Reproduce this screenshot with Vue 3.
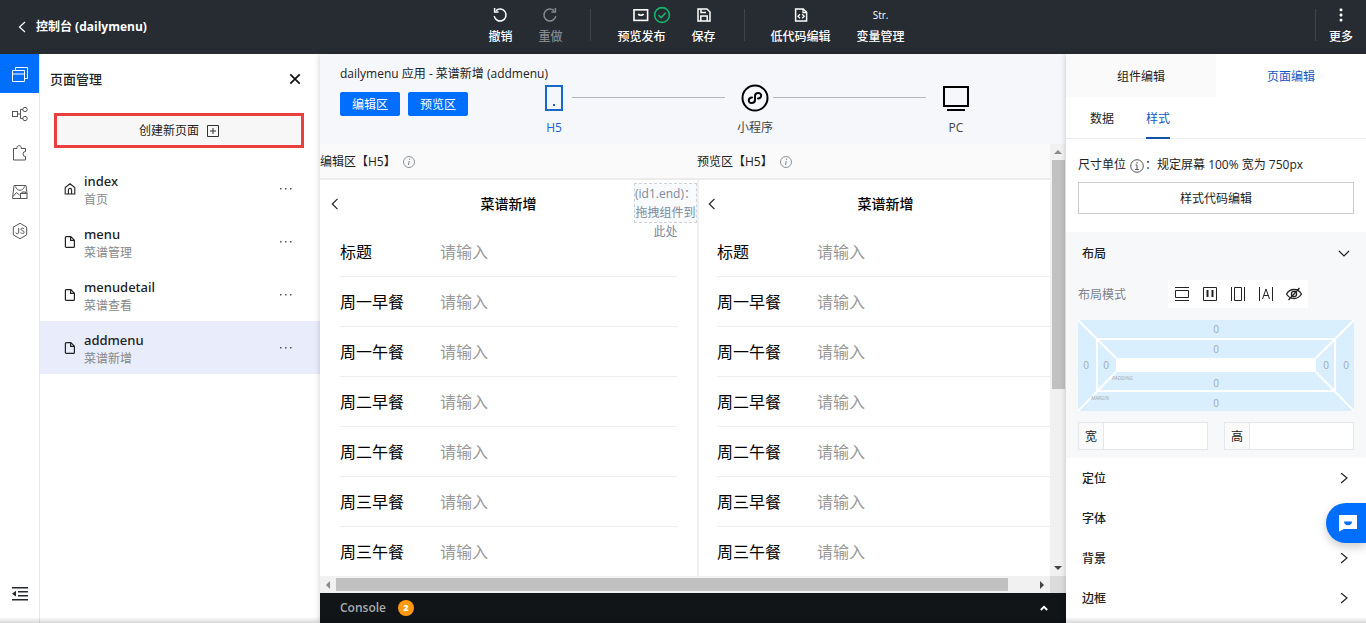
<script setup>
import { ref } from 'vue'

const pages = [
  { name: 'index', title: '首页', home: true },
  { name: 'menu', title: '菜谱管理' },
  { name: 'menudetail', title: '菜谱查看' },
  { name: 'addmenu', title: '菜谱新增' }
]
const current = ref('addmenu')
const fields = ['标题', '周一早餐', '周一午餐', '周二早餐', '周二午餐', '周三早餐', '周三午餐']
const panes = [
  { id: 'edit', title: '编辑区【H5】', slot: true },
  { id: 'preview', title: '预览区【H5】', slot: false }
]
const sections = ['定位', '字体', '背景', '边框']
</script>

<template>
  <div class="app" lang="zh-CN">
    <header class="topbar">
      <div class="topbar-side">
        <a href="#" class="back">
          <svg width="8" height="12" viewBox="0 0 8 12"><path d="M7 1 1.5 6 7 11" fill="none" stroke="#fff" stroke-width="1.2" /></svg>
          <span>控制台 (dailymenu)</span>
        </a>
      </div>
      <nav class="tools">
        <button class="tool">
          <span class="tool-icon"><svg width="16" height="16" viewBox="0 0 16 16" fill="none" stroke="#fff" stroke-width="1.5"><path d="M4 3.6A6 6 0 1 1 2.2 9.2" /><path d="M2.6 1v4h4" /></svg></span>
          <span>撤销</span>
        </button>
        <button class="tool dim">
          <span class="tool-icon"><svg width="16" height="16" viewBox="0 0 16 16" fill="none" stroke="#85888c" stroke-width="1.5"><path d="M12 3.6A6 6 0 1 0 13.8 9.2" /><path d="M13.4 1v4h-4" /></svg></span>
          <span>重做</span>
        </button>
        <i class="sep"></i>
        <button class="tool">
          <span class="tool-icon">
            <svg width="16" height="16" viewBox="0 0 16 16" fill="none" stroke="#fff" stroke-width="1.6"><rect x="1" y="2.8" width="13.6" height="10.6" /><path d="M5.2 7c1 1.6 4.4 1.6 5.4 0" /></svg>
            <svg class="badge" width="18" height="18" viewBox="0 0 18 18" fill="none" stroke="#10b86a" stroke-width="1.6"><circle cx="9" cy="9" r="7.4" /><path d="M5.4 9l2.8 2.6 4.6-4.8" /></svg>
          </span>
          <span>预览发布</span>
        </button>
        <button class="tool">
          <span class="tool-icon"><svg width="16" height="16" viewBox="0 0 16 16" fill="none" stroke="#fff" stroke-width="1.5"><path d="M2 2h9l3 3v9H2z" /><path d="M5 2v3.6h5M4.8 14V9h6.4v5" /></svg></span>
          <span>保存</span>
        </button>
        <i class="sep"></i>
        <button class="tool">
          <span class="tool-icon"><svg width="16" height="16" viewBox="0 0 16 16" fill="none" stroke="#fff" stroke-width="1.5"><path d="M2.6 2h7.6l3.4 3.4V14h-11z" /><path d="M10 2v3.6h3.6" stroke-width="1.2" /><path d="M7 7.2 5 9.2l2 2M9.2 7.2l2 2-2 2" stroke-width="1.3" /></svg></span>
          <span>低代码编辑</span>
        </button>
        <button class="tool">
          <span class="tool-icon str">Str.</span>
          <span>变量管理</span>
        </button>
      </nav>
      <div class="topbar-side end">
        <i class="sep"></i>
        <button class="tool">
          <span class="tool-icon"><svg width="16" height="16" viewBox="0 0 16 16" fill="#fff"><rect x="6.6" y="1.4" width="2.8" height="2.8" rx="1" /><rect x="6.6" y="6.6" width="2.8" height="2.8" rx="1" /><rect x="6.6" y="11.8" width="2.8" height="2.8" rx="1" /></svg></span>
          <span>更多</span>
        </button>
      </div>
    </header>

    <div class="body">
      <nav class="rail">
        <button class="rail-btn active" aria-label="页面">
          <svg width="18" height="18" viewBox="0 0 18 18" fill="none" stroke="#fff"><path d="M4.5 4.5v-3h12v11h-3M1.5 4.5h12v11h-12zM1.5 8h12" /></svg>
        </button>
        <button class="rail-btn" aria-label="流程">
          <svg width="18" height="18" viewBox="0 0 18 18" fill="none" stroke="#555"><rect x="1.5" y="6.5" width="5" height="5" /><path d="M6.5 9h3M12 4.5H9.5v9H12" /><circle cx="14" cy="4.500" r="2.200" /><circle cx="14" cy="13.500" r="2.200" /></svg>
        </button>
        <button class="rail-btn" aria-label="组件">
          <svg width="18" height="18" viewBox="0 0 18 18" fill="none" stroke="#555"><path d="M2.500 4.500H6a2.200 2.200 0 1 1 4.200 0h4.300v3a2.400 2.400 0 1 0 0 5v3.500h-12z" /></svg>
        </button>
        <button class="rail-btn" aria-label="素材">
          <svg width="18" height="18" viewBox="0 0 18 18" fill="none" stroke="#555"><path d="M9 15.500H1.500l1.500-13h12l1 8M4.500 3.500C6 8.500 12 8.500 13.500 3.500M2 13.500l3.500-4 3 2.500" /><rect x="9.500" y="10.500" width="6.500" height="5" /><path d="M11 10.500V9h3.500v1.500" /></svg>
        </button>
        <button class="rail-btn" aria-label="脚本">
          <svg width="18" height="18" viewBox="0 0 18 18" fill="none" stroke="#555"><path d="M9 1.300l6.700 3.800v7.800L9 16.700l-6.700-3.800V5.100z" /><path d="M7.700 6v4.200c0 2-2.700 2-2.900.3M13 7c-.6-1.300-3-1.200-3 .3 0 1.700 3.200 1 3.200 2.900 0 1.700-3 1.700-3.500.2" /></svg>
        </button>
        <button class="rail-btn rail-last" aria-label="收起">
          <svg width="18" height="16" viewBox="0 0 18 16" fill="#24292f"><path d="M1 1h16v1.500H1zM7 5h10v1.500H7zM7 9h10v1.500H7zM1 13h16v1.500H1zM1 7.700l4-2.900v5.800z" /></svg>
        </button>
      </nav>

      <aside class="pages">
        <div class="pages-head">
          <h2>页面管理</h2>
          <button class="plain" aria-label="关闭"><svg width="12" height="12" viewBox="0 0 12 12"><path d="M1.300 1.300l9.400 9.400M10.700 1.300l-9.400 9.400" stroke="#111" stroke-width="1.700" /></svg></button>
        </div>
        <button class="create">
          <span>创建新页面</span>
          <svg width="12" height="12" viewBox="0 0 12 12" fill="none" stroke="#333"><path d="M.5.5h11v11H.5zM6 3v6M3 6h6" /></svg>
        </button>
        <ul class="page-list">
          <li v-for="p in pages" :key="p.name" :class="{ on: p.name === current }" @click="current = p.name">
            <svg v-if="p.home" width="12" height="14" viewBox="0 0 12 14" fill="none" stroke="#222" stroke-width="1.1"><path d="M1.200 12V5.500L6 1.800l4.800 3.700V12zM4.400 12V8a1.600 1.600 0 0 1 3.200 0v4" /></svg>
            <svg v-else width="12" height="14" viewBox="0 0 12 14" fill="none" stroke="#222" stroke-width="1.2"><path d="M2.400 1.600h4.400l3.600 3.600v6.200q0 1-1 1h-7q-1 0-1-1V2.600q0-1 1-1zM6.600 1.600v3.800h3.800" /></svg>
            <div class="page-text">
              <strong>{{ p.name }}</strong>
              <span>{{ p.title }}</span>
            </div>
            <button class="plain" aria-label="更多操作"><svg width="14" height="4" viewBox="0 0 14 4" fill="#555"><rect x="1" y="1" width="1.500" height="1.500" /><rect x="6" y="1" width="1.500" height="1.500" /><rect x="11" y="1" width="1.500" height="1.500" /></svg></button>
          </li>
        </ul>
      </aside>

      <main class="work">
        <div class="platform">
          <div class="crumb">dailymenu 应用 - 菜谱新增 (addmenu)</div>
          <div class="platform-row">
            <button class="primary">编辑区</button>
            <button class="primary">预览区</button>
            <div class="steps">
              <a href="#" class="step active">
                <svg width="28" height="28" viewBox="0 0 28 28"><rect x="6" y="2" width="16" height="24" fill="none" stroke="#1668c9" stroke-width="2" /><rect x="13" y="20" width="2" height="2" fill="#1668c9" /></svg>
                <span>H5</span>
              </a>
              <i class="step-line"></i>
              <a href="#" class="step">
                <svg width="28" height="28" viewBox="0 0 28 28" fill="none" stroke="#000" stroke-width="2"><circle cx="14" cy="14" r="12.500" /><path d="M11 13.500c-4 0-4.300 5.500-.600 5.500 2.300 0 3.600-1.300 3.600-3v-4c0-1.700 1.300-3 3.300-3 4 0 3.700 5.500-.300 5.500" stroke-linecap="round" /></svg>
                <span>小程序</span>
              </a>
              <i class="step-line"></i>
              <a href="#" class="step">
                <svg width="28" height="28" viewBox="0 0 28 28" fill="none" stroke="#000" stroke-width="2"><path d="M2 3h24v19H2zM5 26h18" /></svg>
                <span>PC</span>
              </a>
            </div>
          </div>
        </div>

        <div class="stage">
          <div class="viewport">
            <div class="canvas">
              <section v-for="pane in panes" :key="pane.id" class="pane">
                <div class="pane-title">
                  <span>{{ pane.title }}</span>
                  <svg width="12" height="12" viewBox="0 0 12 12" fill="none" stroke="#8b949c"><circle cx="6" cy="6" r="5.500" /><path d="M6.700 2.600l-.200 1.200M6.200 5l-.700 4" stroke-width="1.200" /></svg>
                </div>
                <div class="phone">
                  <div class="phone-nav">
                    <svg width="8" height="12" viewBox="0 0 8 12"><path d="M6.500.8 1.300 6l5.200 5.200" fill="none" stroke="#222" stroke-width="1.200" /></svg>
                    <h3>菜谱新增</h3>
                  </div>
                  <div v-if="pane.slot" class="dropzone">(id1.end)：拖拽组件到此处</div>
                  <div v-for="(f, i) in fields" :key="f" class="field">
                    <label :for="pane.id + i">{{ f }}</label>
                    <input :id="pane.id + i" type="text" placeholder="请输入" />
                  </div>
                </div>
              </section>
            </div>
          </div>
          <div class="vbar">
            <svg width="8" height="16" viewBox="0 0 8 16"><path d="M4 6 8 10H0z" fill="#8a8a8a" /></svg>
            <i class="vthumb"></i>
            <i class="fill"></i>
            <svg width="8" height="16" viewBox="0 0 8 16"><path d="M4 10 0 6h8z" fill="#444" /></svg>
          </div>
          <div class="hbar">
            <svg width="16" height="8" viewBox="0 0 16 8"><path d="M6 4 10 0v8z" fill="#8a8a8a" /></svg>
            <i class="hthumb"></i>
            <i class="fill"></i>
            <svg width="16" height="8" viewBox="0 0 16 8"><path d="M10 4 6 0v8z" fill="#444" /></svg>
          </div>
          <i class="corner"></i>
        </div>

        <footer class="console">
          <span>Console</span>
          <b>2</b>
          <button class="plain" aria-label="展开"><svg width="8" height="6" viewBox="0 0 8 6"><path d="M.8 5 4 1.800 7.200 5" fill="none" stroke="#fff" stroke-width="1.800" /></svg></button>
        </footer>
      </main>

      <aside class="props">
        <div class="main-tabs">
          <button>组件编辑</button>
          <button class="on">页面编辑</button>
        </div>
        <div class="sub-tabs">
          <button>数据</button>
          <button class="on">样式</button>
        </div>
        <div class="unit">
          <p>
            <span>尺寸单位</span>
            <svg width="14" height="14" viewBox="0 0 14 14" fill="none" stroke="#555"><circle cx="7" cy="7" r="6.300" /><path d="M7 3v1.500M5.500 6H7v4.500M5.200 10.500h3.600" /></svg>
            <span>：规定屏幕 100% 宽为 750px</span>
          </p>
          <button class="code-btn">样式代码编辑</button>
        </div>
        <section class="layout">
          <button class="fold">
            <span>布局</span>
            <svg width="12" height="12" viewBox="0 0 12 12"><path d="M1 3l5 5 5-5" fill="none" stroke="#222" stroke-width="1.200" /></svg>
          </button>
          <div class="mode">
            <span>布局模式</span>
            <div class="modes">
              <button aria-label="block"><svg width="16" height="16" viewBox="0 0 16 16" fill="none" stroke="#222"><path d="M1 1.500h14M1 14.500h14M1.500 4.500h13v7h-13z" /></svg></button>
              <button aria-label="flex"><svg width="16" height="16" viewBox="0 0 16 16" fill="none" stroke="#222"><path d="M1.500 1.500h13v13h-13z" /><path d="M5.500 4v7M10.500 4v7" stroke-width="2" /></svg></button>
              <button aria-label="inline-block"><svg width="16" height="16" viewBox="0 0 16 16" fill="none" stroke="#222"><path d="M1.500 1v14M14.500 1v14M4.500 1.500h7v13h-7z" /></svg></button>
              <button aria-label="inline"><svg width="16" height="16" viewBox="0 0 16 16" fill="none" stroke="#222"><path d="M1.500 1v14M14.500 1v14M4.500 13 8 3l3.500 10M5.700 9.500h4.600" /></svg></button>
              <button aria-label="none"><svg width="18" height="16" viewBox="0 0 18 16" fill="none" stroke="#222" stroke-width="1.300"><path d="M1.500 8C5 2 13 2 16.500 8 13 14 5 14 1.500 8zM14.500 2 3.500 14" /><circle cx="9" cy="8" r="2.600" /></svg></button>
            </div>
          </div>
          <svg class="box" viewBox="0 0 276 91">
            <rect width="276" height="91" rx="2" fill="#d9effd" />
            <g stroke="#fff" stroke-width="2" fill="none">
              <rect x="19" y="19" width="238" height="52" />
              <path d="M0 0 38 38M276 0 238 38M0 91 38 52M276 91 238 52" />
            </g>
            <rect x="38" y="38" width="200" height="14" fill="#fff" />
            <g class="nums">
              <text x="138" y="13">0</text><text x="138" y="33">0</text>
              <text x="138" y="67">0</text><text x="138" y="87">0</text>
              <text x="8" y="49">0</text><text x="28" y="49">0</text>
              <text x="248" y="49">0</text><text x="268" y="49">0</text>
            </g>
            <g class="tiny"><text x="34" y="60">PADDING</text><text x="13" y="80">MARGIN</text></g>
          </svg>
          <div class="sizes">
            <div class="size"><label for="w">宽</label><input id="w" type="text" /></div>
            <div class="size"><label for="h">高</label><input id="h" type="text" /></div>
          </div>
        </section>
        <button v-for="s in sections" :key="s" class="fold closed">
          <span>{{ s }}</span>
          <svg width="12" height="12" viewBox="0 0 12 12"><path d="M3 0l6 5-6 5" fill="none" stroke="#222" stroke-width="1.200" /></svg>
        </button>
      </aside>
    </div>

    <button class="chat" aria-label="客服">
      <svg width="18" height="18" viewBox="0 0 18 18"><path d="M0 1h18v14H5l-5 2.500z" fill="#fff" /><path d="M5 7.500h8c0 5-8 5-8 0z" fill="#006eff" /></svg>
    </button>
    <div class="edge"></div>
  </div>
</template>

<style>
body { margin: 0; overflow: hidden; }
</style>

<style scoped>
.app {
  height: 100vh;
  display: flex;
  flex-direction: column;
  font: 12px/18px "Open Sans", "Noto Sans CJK SC", sans-serif;
  color: #222;
  background: #fff;
  overflow: hidden;
}
.app * { box-sizing: border-box; }
button { font: inherit; color: inherit; border: 0; background: none; padding: 0; margin: 0; cursor: pointer; }
input { font: inherit; border: 0; background: none; padding: 0; min-width: 0; outline: 0; }
a { color: inherit; text-decoration: none; }
h2, h3, p, ul { margin: 0; padding: 0; }
svg { display: block; flex: none; }
i { display: block; }
.plain { display: flex; }

.topbar { flex: none; height: 54px; background: #272b32; color: #fff; display: flex; }
.topbar-side { flex: 1; display: flex; align-items: center; padding-left: 18px; }
.topbar-side.end { justify-content: flex-end; align-items: stretch; gap: 13px; padding: 0 13px 0 0; }
.back { display: flex; align-items: center; gap: 10px; font-weight: 700; }
.tools { display: flex; gap: 26px; padding-left: 22px; }
.tool { display: flex; flex-direction: column; align-items: center; gap: 4px; padding-top: 6px; font-weight: 500; }
.tool.dim { color: #85888c; }
.tool-icon { position: relative; height: 18px; display: flex; align-items: center; }
.tool-icon.str { font-size: 10px; }
.badge { position: absolute; left: 20px; top: 0; }
.sep { width: 1px; height: 32px; margin: 9px 0 0 2px; background: #3f434a; }

.body { flex: 1; min-height: 0; display: flex; }
.rail { flex: none; width: 40px; border-right: 1px solid #e8e8e8; display: flex; flex-direction: column; }
.rail-btn { height: 39px; display: flex; align-items: center; justify-content: center; padding-top: 2px; }
.rail-btn.active { background: #006eff; }
.rail-last { margin-top: auto; margin-bottom: 11px; }

.pages { flex: none; width: 280px; }
.pages-head { display: flex; align-items: center; justify-content: space-between; height: 50px; padding: 0 19px 0 10px; }
.pages-head h2 { font-size: 13px; font-weight: 500; }
.create {
  display: flex; align-items: center; justify-content: center; gap: 8px;
  width: calc(100% - 30px); height: 35px; margin: 9px 16px 14px 14px;
  border: 3px solid #eb3f3f; background: #f7f7f7;
}
.page-list { list-style: none; }
.page-list li { height: 53px; display: flex; align-items: center; gap: 8px; padding: 0 27px 0 24px; }
.page-list li.on { background: #e9ecfa; }
.page-text { flex: 1; display: flex; flex-direction: column; padding-top: 3px; }
.page-text strong { font-family: "Noto Sans", sans-serif; font-size: 13px; line-height: 19px; font-weight: 500; }
.page-text span { color: #888; }

.work { flex: 1; min-width: 0; display: flex; flex-direction: column; box-shadow: 0 0 6px rgba(0, 0, 0, 0.2); }
.platform { flex: none; height: 90px; background: #f5f7fa; padding: 11px 92px 0 20px; }
.platform-row { display: flex; align-items: flex-start; gap: 8px; }
.primary { flex: none; width: 60px; height: 24px; margin-top: 9px; padding-top: 2px; border-radius: 2px; background: #006eff; color: #fff; }
.steps { flex: 1; display: flex; margin-left: 60px; }
.step { flex: none; width: 36px; display: flex; flex-direction: column; align-items: center; gap: 7px; padding-top: 1px; color: #444; white-space: nowrap; }
.step.active { color: #1f62d6; }
.step-line { flex: 1; height: 1px; margin: 14px 12px 0 0; background: #b4b8bc; }

.stage { flex: 1; min-height: 0; display: grid; grid-template: minmax(0, 1fr) 17px / minmax(0, 1fr) 16px; }
.viewport { overflow: hidden; background: #fff; }
.canvas { width: calc(100% + 24px); display: grid; grid-template-columns: 1fr 1fr; }
.pane { position: relative; }
.pane + .pane .phone { box-shadow: inset 2px 0 0 #f0f0f0; }
.pane-title { height: 36px; display: flex; align-items: center; gap: 7px; padding-top: 2px; background: #fafafa; border-bottom: 2px solid #ececec; }
.phone-nav { height: 47px; display: flex; align-items: center; padding: 0 11px; }
.phone-nav h3 { flex: 1; text-align: center; font-size: 14px; font-weight: 500; color: #000; padding-right: 8px; }
.dropzone {
  position: absolute; top: 39px; right: 0; width: 63px; height: 40px;
  border: 1px dashed #ccd3da; background: #f8fafc; color: #7c8a9c;
  line-height: 19px; text-align: center;
}
.field { height: 50px; margin: 0 20px; display: flex; align-items: center; border-bottom: 1px solid #eee; font-size: 16px; color: #000; }
.field label { flex: none; width: 100px; }
.field input { flex: 1; }
.field input::placeholder { color: #999; opacity: 1; }
.vbar { display: flex; flex-direction: column; align-items: center; background: #f1f1f1; }
.vthumb { width: 13px; height: 53%; background: #c1c1c1; }
.hbar { display: flex; align-items: center; background: #f1f1f1; }
.hthumb { width: 92%; height: 13px; background: #c1c1c1; }
.fill { flex: 1; }
.corner { background: #dcdcdc; }
.console { flex: none; height: 30px; background: #111518; color: #a8abae; display: flex; align-items: center; padding: 0 18px 0 20px; font-weight: 600; }
.console b { width: 16px; height: 16px; margin: 0 auto 0 12px; border-radius: 8px; background: #ff9a0f; color: #fff; font-size: 9px; line-height: 16px; text-align: center; }

.props { flex: none; width: 300px; position: relative; background: #fff; box-shadow: 0 0 6px rgba(0, 0, 0, 0.2); }
.main-tabs { display: flex; height: 43px; }
.main-tabs button { flex: 1; padding-top: 2px; background: #fafafa; }
.main-tabs button.on { background: #fff; color: #1359c4; }
.sub-tabs { height: 42px; display: flex; gap: 32px; padding: 0 24px; border-bottom: 1px solid #eee; }
.sub-tabs button { height: 42px; padding-top: 3px; border-bottom: 2px solid transparent; }
.sub-tabs button.on { color: #1359c4; border-color: #0f55a5; }
.unit { padding: 17px 12px 18px; }
.unit p { display: flex; align-items: center; height: 18px; margin-bottom: 8px; white-space: nowrap; }
.unit p svg { margin: 1px 1px 0 4px; }
.code-btn { width: 100%; height: 32px; padding-top: 2px; border: 1px solid #ccc; background: #fff; }
.layout { background: #f7f8fa; padding: 0 12px 8px; }
.fold { width: 100%; display: flex; align-items: center; justify-content: space-between; height: 42px; padding: 2px 4px 0; font-weight: 500; }
.fold.closed { height: 40px; padding: 2px 16px 0; }
.mode { display: flex; align-items: center; margin: 6px 0 12px; color: #7a818c; }
.mode > span { width: 90px; padding-top: 2px; }
.modes { display: flex; background: #fff; }
.modes button { width: 28px; height: 28px; display: flex; align-items: center; justify-content: center; }
.box { width: 100%; }
.nums text { font-size: 10px; fill: #a0aab4; text-anchor: middle; }
.tiny text { font-size: 5px; font-style: italic; fill: #a0aab4; }
.sizes { display: grid; grid-template-columns: minmax(0, 1fr) minmax(0, 1fr); gap: 16px; margin-top: 11px; }
.size { display: flex; height: 28px; border: 1px solid #e4e7eb; background: #fff; }
.size label { flex: none; width: 25px; background: #fafafa; border-right: 1px solid #e4e7eb; text-align: center; line-height: 27px; }
.size input { flex: 1; }

.chat {
  position: fixed; right: 0; bottom: 80px; width: 40px; height: 40px;
  padding-left: 13px; border-radius: 20px 0 0 20px; background: #006eff;
  box-shadow: 0 4px 10px rgba(0, 0, 0, 0.2);
}
.edge { position: fixed; left: 0; right: 0; bottom: 0; height: 6px; background: linear-gradient(transparent, rgba(0, 0, 0, 0.15)); pointer-events: none; }
</style>
